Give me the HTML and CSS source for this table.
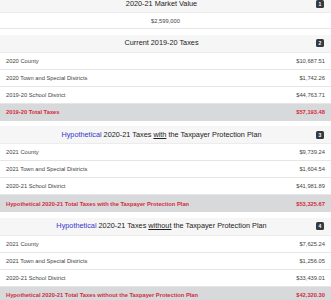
FILE: index.html
```html
<!DOCTYPE html>
<html>
<head>
<meta charset="utf-8">
<link rel="stylesheet" href="styles.css">
</head>
<body>
<div class="page">
  <section class="card">
    <div class="card-header">
      <h2 class="title">2020-21 Market Value</h2>
      <span class="badge">1</span>
    </div>
    <div class="row row-center">$2,599,000</div>
  </section>

  <section class="card">
    <div class="card-header">
      <h2 class="title">Current 2019-20 Taxes</h2>
      <span class="badge">2</span>
    </div>
    <div class="row"><span>2020 County</span><span>$10,687.51</span></div>
    <div class="row"><span>2020 Town and Special Districts</span><span>$1,742.26</span></div>
    <div class="row"><span>2019-20 School District</span><span>$44,763.71</span></div>
    <div class="row row-total"><span>2019-20 Total Taxes</span><span>$57,193.48</span></div>
  </section>

  <section class="card">
    <div class="card-header">
      <h2 class="title"><span class="hypo">Hypothetical</span> 2020-21 Taxes <u>with</u> the Taxpayer Protection Plan</h2>
      <span class="badge">3</span>
    </div>
    <div class="row"><span>2021 County</span><span>$9,739.24</span></div>
    <div class="row"><span>2021 Town and Special Districts</span><span>$1,604.54</span></div>
    <div class="row"><span>2020-21 School District</span><span>$41,981.89</span></div>
    <div class="row row-total"><span>Hypothetical 2020-21 Total Taxes with the Taxpayer Protection Plan</span><span>$53,325.67</span></div>
  </section>

  <section class="card">
    <div class="card-header">
      <h2 class="title"><span class="hypo">Hypothetical</span> 2020-21 Taxes <u>without</u> the Taxpayer Protection Plan</h2>
      <span class="badge">4</span>
    </div>
    <div class="row"><span>2021 County</span><span>$7,625.24</span></div>
    <div class="row"><span>2021 Town and Special Districts</span><span>$1,256.05</span></div>
    <div class="row"><span>2020-21 School District</span><span>$33,439.01</span></div>
    <div class="row row-total"><span>Hypothetical 2020-21 Total Taxes without the Taxpayer Protection Plan</span><span>$42,320.30</span></div>
  </section>
</div>
</body>
</html>
```
FILE: styles.css
```css
html, body {
  margin: 0;
  padding: 0;
  background: #fff;
}
body {
  font-family: "Liberation Sans", Arial, sans-serif;
  color: #333;
  overflow: hidden;
}
.page {
  margin-top: -5px;
  display: flex;
  flex-direction: column;
  gap: 5.5px;
}
.card {
  display: flex;
  flex-direction: column;
}
.card-header {
  height: 18px;
  background: #f6f6f6;
  display: flex;
  align-items: center;
  padding: 0 7px;
  border-bottom: 1px solid #ececec;
  box-sizing: border-box;
}
.title {
  flex: 1;
  margin: 0;
  font-size: 7.3px;
  font-weight: normal;
  color: #222;
  white-space: nowrap;
  text-align: center;
  line-height: 1;
}
.hypo {
  color: #3535cf;
}
.badge {
  background: #343a40;
  color: #fff;
  font-size: 5px;
  font-weight: bold;
  line-height: 8px;
  min-width: 8px;
  height: 8px;
  text-align: center;
  border-radius: 1.5px;
}
.row {
  height: 17px;
  box-sizing: border-box;
  display: flex;
  justify-content: space-between;
  align-items: center;
  padding: 0 6px;
  font-size: 5.75px;
  border-bottom: 1px solid #e6e6e6;
  color: #444;
}
.row-center {
  justify-content: center;
  height: 16px;
}
.row-total {
  background: #d8d9db;
  color: #d42b40;
  font-weight: bold;
  border-bottom: none;
}
```
